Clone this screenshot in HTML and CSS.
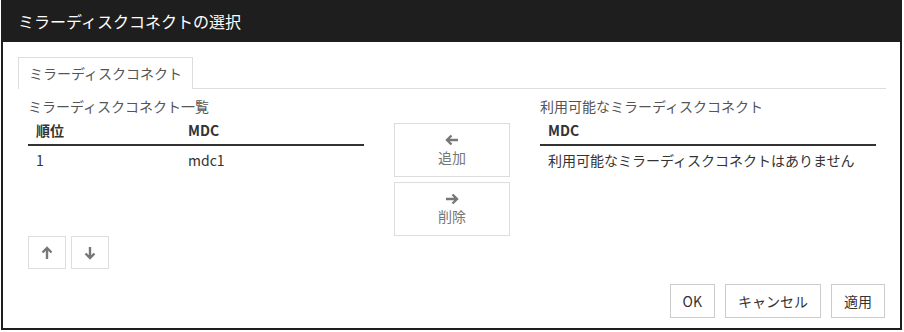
FILE: index.html
```html
<!DOCTYPE html>
<html lang="ja">
<head>
<meta charset="utf-8">
<link rel="stylesheet" href="styles.css">
</head>
<body>
<div class="window">
  <div class="titlebar">ミラーディスクコネクトの選択</div>
  <div class="main">
    <div class="content">
      <div class="tabs"><div class="tab">ミラーディスクコネクト</div></div>
      <div class="panel">
        <div class="col list">
          <div class="label">ミラーディスクコネクト一覧</div>
          <div class="table-wrap">
            <table class="tbl">
              <thead><tr><th class="c1">順位</th><th>MDC</th></tr></thead>
              <tbody><tr><td class="c1">1</td><td>mdc1</td></tr></tbody>
            </table>
          </div>
          <div class="order-btns">
            <button class="sq-btn" type="button"><svg width="12" height="14" viewBox="0 0 12 14"><path d="M6 13V2.5M1.5 6.5L6 2L10.5 6.5" fill="none" stroke="#777" stroke-width="2.4"/></svg></button>
            <button class="sq-btn" type="button"><svg width="12" height="14" viewBox="0 0 12 14"><path d="M6 1V11.5M1.5 7.5L6 12L10.5 7.5" fill="none" stroke="#777" stroke-width="2.4"/></svg></button>
          </div>
        </div>
        <div class="col mid">
          <button class="move-btn" type="button"><svg width="14" height="12" viewBox="0 0 14 12"><path d="M13 6H2.5M6.5 1.5L2 6L6.5 10.5" fill="none" stroke="#777" stroke-width="2.4"/></svg><span>追加</span></button>
          <button class="move-btn" type="button"><svg width="14" height="12" viewBox="0 0 14 12"><path d="M1 6H11.5M7.5 1.5L12 6L7.5 10.5" fill="none" stroke="#777" stroke-width="2.4"/></svg><span>削除</span></button>
        </div>
        <div class="col list">
          <div class="label">利用可能なミラーディスクコネクト</div>
          <table class="tbl">
            <thead><tr><th>MDC</th></tr></thead>
            <tbody><tr><td>利用可能なミラーディスクコネクトはありません</td></tr></tbody>
          </table>
        </div>
      </div>
    </div>
    <div class="footer">
      <button class="ft-btn" type="button">OK</button>
      <button class="ft-btn" type="button">キャンセル</button>
      <button class="ft-btn" type="button">適用</button>
    </div>
  </div>
</div>
</body>
</html>
```
FILE: styles.css
```css
* { box-sizing: border-box; }
html, body { margin: 0; padding: 0; background: #fff; }
body {
  font-family: "Noto Sans CJK JP", "Open Sans", sans-serif;
  font-size: 14px;
  color: #333;
  width: 904px;
  height: 332px;
  overflow: hidden;
}
.window {
  margin-left: 1px;
  width: 901px;
  height: 330px;
  border: 2px solid #1e1e1e;
  border-top: 0;
  display: flex;
  flex-direction: column;
  background: #fff;
}
.titlebar {
  height: 42px;
  margin: 0 -2px;
  background: #1e1e1e;
  color: #fff;
  font-size: 16px;
  line-height: 42px;
  padding-left: 17px;
}
.main {
  flex: 1;
  display: flex;
  flex-direction: column;
  justify-content: space-between;
  padding: 15px 15px 10px 15px;
}
.tabs {
  border-bottom: 1px solid #ddd;
  display: flex;
  margin-right: -1px;
}
.tab {
  height: 32px;
  margin-bottom: -1px;
  border: 1px solid #ddd;
  border-bottom: 0;
  background: #fff;
  padding: 0 10px;
  line-height: 30px;
  color: #555;
  font-size: 14px;
}
.panel {
  display: flex;
  padding: 7px 0 0 10px;
}
.col.list { width: 336px; }
.col.mid {
  width: 116px;
  margin: 0 30px 0 30px;
  padding-top: 27px;
  display: flex;
  flex-direction: column;
  gap: 5px;
}
.label {
  line-height: 20px;
  color: #555;
}
.table-wrap { height: 120px; }
.tbl {
  width: 100%;
  border-collapse: collapse;
}
.tbl th {
  text-align: left;
  font-weight: bold;
  line-height: 20px;
  padding: 4px 8px;
  border-bottom: 2px solid #333;
  color: #333;
}
.tbl td {
  line-height: 20px;
  padding: 4px 8px;
  color: #333;
}
.tbl .c1 { width: 152px; }
.order-btns {
  display: flex;
  gap: 5px;
}
button {
  font-family: inherit;
  font-size: 14px;
  background: #fff;
  border: 1px solid #ddd;
  margin: 0;
  padding: 0;
}
.sq-btn {
  width: 38px;
  height: 33px;
  display: flex;
  align-items: center;
  justify-content: center;
}
.move-btn {
  width: 116px;
  height: 54px;
  display: flex;
  flex-direction: column;
  align-items: center;
  padding-top: 10px;
  color: #777;
}
.move-btn span {
  line-height: 20px;
  margin-top: 1px;
}
.footer {
  display: flex;
  justify-content: flex-end;
  gap: 10px;
}
.ft-btn {
  height: 34px;
  padding: 0 12px;
  color: #333;
  border-color: #ccc;
  line-height: 32px;
}
```
